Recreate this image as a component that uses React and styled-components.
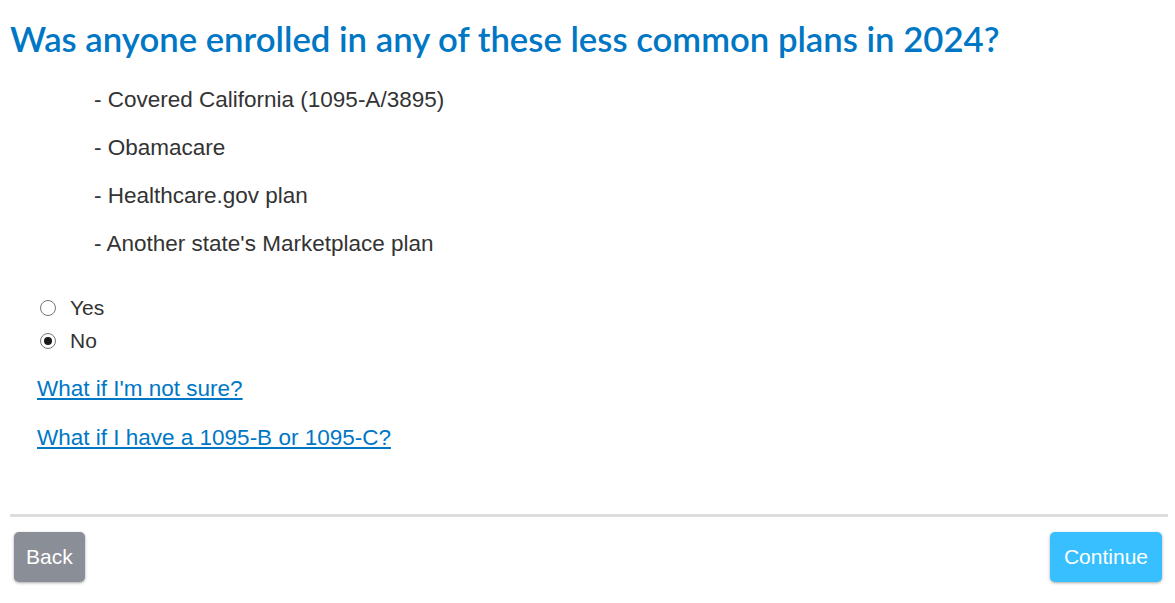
import React, { useState } from 'react';
import styled, { createGlobalStyle } from 'styled-components';

const GlobalStyle = createGlobalStyle`
  html, body {
    margin: 0;
    padding: 0;
    background: #ffffff;
  }
  body {
    font-family: 'Liberation Sans', Arial, sans-serif;
  }
`;

const Page = styled.div`
  width: 1175px;
  height: 603px;
  box-sizing: border-box;
  padding: 18px 7px 0 10px;
  display: flex;
  flex-direction: column;
  overflow: hidden;
`;

const Title = styled.h1`
  margin: 0;
  font-family: Lato, 'Open Sans', sans-serif;
  font-weight: 600;
  font-size: 34.7px;
  line-height: 42px;
  color: #0077c5;
`;

const PlanList = styled.ul`
  list-style: none;
  margin: 27px 0 0;
  padding: 0 0 0 84px;
  display: flex;
  flex-direction: column;
  gap: 22px;
`;

const PlanItem = styled.li`
  font-size: 22.5px;
  line-height: 26px;
  color: #333333;
`;

const Choices = styled.div`
  margin: 39px 0 0 28px;
  display: flex;
  flex-direction: column;
  gap: 9px;
`;

const Choice = styled.label`
  display: flex;
  align-items: center;
  gap: 14px;
  font-size: 21px;
  line-height: 24px;
  color: #333333;
  cursor: pointer;
`;

const Radio = styled.span`
  width: 16px;
  height: 16px;
  box-sizing: border-box;
  border: 1px solid #767676;
  border-radius: 50%;
  display: flex;
  align-items: center;
  justify-content: center;
  background: #fff;
  margin-left: 2px;

  &::after {
    content: '';
    width: 8px;
    height: 8px;
    border-radius: 50%;
    background: ${p => (p.$checked ? '#1a1a1a' : 'transparent')};
  }
`;

const Links = styled.div`
  margin: 23px 0 0 27px;
  display: flex;
  flex-direction: column;
  gap: 23px;
`;

const HelpLink = styled.a`
  align-self: flex-start;
  font-size: 22.5px;
  line-height: 26px;
  color: #0077c5;
  text-decoration: underline;
  text-underline-offset: 2px;
  cursor: pointer;
`;

const Footer = styled.div`
  margin-top: auto;
  padding-bottom: 21px;
`;

const Divider = styled.hr`
  margin: 0;
  border: none;
  height: 3px;
  background: #dddddd;
`;

const ButtonRow = styled.div`
  display: flex;
  justify-content: space-between;
  margin-top: 15px;
  padding: 0 6px 0 4px;
`;

const Button = styled.button`
  height: 50px;
  padding: 0 ${p => (p.$primary ? '14px' : '12px')};
  border: none;
  border-radius: 5px;
  font-family: 'Liberation Sans', Arial, sans-serif;
  font-size: 21px;
  color: #ffffff;
  background: ${p => (p.$primary ? '#37bfff' : '#8a8e96')};
  box-shadow: 0 1px 3px rgba(0, 0, 0, 0.35);
  cursor: pointer;
`;

const plans = [
  '- Covered California (1095-A/3895)',
  '- Obamacare',
  '- Healthcare.gov plan',
  "- Another state's Marketplace plan",
];

export default function App() {
  const [answer, setAnswer] = useState('no');

  return (
    <Page>
      <GlobalStyle />
      <Title>Was anyone enrolled in any of these less common plans in 2024?</Title>
      <PlanList>
        {plans.map(p => (
          <PlanItem key={p}>{p}</PlanItem>
        ))}
      </PlanList>
      <Choices>
        <Choice onClick={() => setAnswer('yes')}>
          <Radio $checked={answer === 'yes'} />
          Yes
        </Choice>
        <Choice onClick={() => setAnswer('no')}>
          <Radio $checked={answer === 'no'} />
          No
        </Choice>
      </Choices>
      <Links>
        <HelpLink>What if I'm not sure?</HelpLink>
        <HelpLink>What if I have a 1095-B or 1095-C?</HelpLink>
      </Links>
      <Footer>
        <Divider />
        <ButtonRow>
          <Button>Back</Button>
          <Button $primary>Continue</Button>
        </ButtonRow>
      </Footer>
    </Page>
  );
}
